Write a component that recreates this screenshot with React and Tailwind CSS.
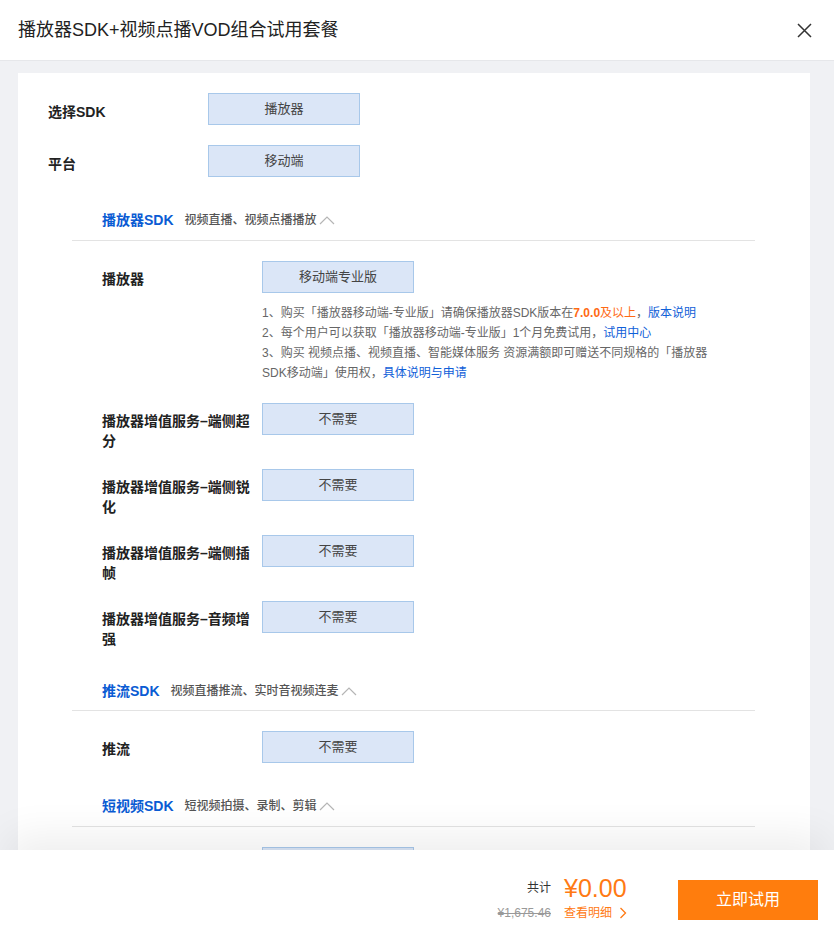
import React from 'react';

const FONT = { fontFamily: '"Liberation Sans", "Noto Sans CJK SC", sans-serif' };

function OptionBox({ children }) {
  return (
    <div className="w-[152px] h-[32px] shrink-0 flex items-center justify-center bg-[#dbe6f7] border border-[#a8c8ea] text-[13px] text-[#444]">
      {children}
    </div>
  );
}

function ChevronUp() {
  return (
    <svg width="16" height="10" viewBox="0 0 16 10" className="ml-[2px]">
      <path d="M1 9 L8 2 L15 9" fill="none" stroke="#b5b5b5" strokeWidth="1.2" />
    </svg>
  );
}

function SectionHeader({ title, desc, className = '' }) {
  return (
    <div className={`flex items-center pl-[30px] border-b border-[#e3e3e3] ${className}`}>
      <span className="text-sm font-bold text-[#0a5bd3] leading-[20px]">{title}</span>
      <span className="ml-[11px] text-xs font-medium text-[#555] leading-[20px]">{desc}</span>
      <ChevronUp />
    </div>
  );
}

function Row({ label, value, className = '' }) {
  return (
    <div className={`flex items-start pl-[30px] ${className}`}>
      <div className="w-[160px] shrink-0 pt-[8px] text-sm font-bold text-[#222] leading-[20px]">{label}</div>
      <OptionBox>{value}</OptionBox>
    </div>
  );
}

const addons = [
  ['播放器增值服务–端侧超', '分'],
  ['播放器增值服务–端侧锐', '化'],
  ['播放器增值服务–端侧插', '帧'],
  ['播放器增值服务–音频增', '强'],
];

export default function App() {
  return (
    <div className="h-[943px] flex flex-col overflow-hidden bg-white" style={FONT}>
      <div className="h-[61px] shrink-0 flex items-center justify-between pl-[18px] pr-[22px] border-b border-[#e6e7ea]">
        <h1 className="text-[18px] text-[#222] font-normal">播放器SDK+视频点播VOD组合试用套餐</h1>
        <svg width="15" height="15" viewBox="0 0 15 15">
          <path d="M1 1 L14 14 M14 1 L1 14" stroke="#333" strokeWidth="1.5" />
        </svg>
      </div>

      <div className="flex-1 overflow-hidden bg-[#f0f1f4] pl-[18px] pr-[24px] pt-[12px]">
        <div className="bg-white px-[30px] pt-[20px] pb-10">
          <div className="flex items-start">
            <div className="w-[160px] pt-[9px] text-sm font-bold text-[#222] leading-[20px]">选择SDK</div>
            <OptionBox>播放器</OptionBox>
          </div>
          <div className="flex items-start mt-[20px]">
            <div className="w-[160px] pt-[9px] text-sm font-bold text-[#222] leading-[20px]">平台</div>
            <OptionBox>移动端</OptionBox>
          </div>

          <div className="ml-[24px] mr-[25px]">
            <SectionHeader className="mt-[33px] pb-[10px]" title="播放器SDK" desc="视频直播、视频点播播放" />
            <Row className="mt-[20px]" label="播放器" value="移动端专业版" />
            <div className="ml-[190px] mt-[10px] text-xs text-[#666] leading-[20px] whitespace-nowrap">
              <div>
                1、购买「播放器移动端-专业版」请确保播放器SDK版本在<span className="font-bold text-[#ff6a14]">7.0.0</span>
                <span className="text-[#ff6a14]">及以上</span>，<span className="text-[#1060d8]">版本说明</span>
              </div>
              <div>
                2、每个用户可以获取「播放器移动端-专业版」1个月免费试用，<span className="text-[#1060d8]">试用中心</span>
              </div>
              <div>3、购买 视频点播、视频直播、智能媒体服务 资源满额即可赠送不同规格的「播放器</div>
              <div>
                SDK移动端」使用权，<span className="text-[#1060d8]">具体说明与申请</span>
              </div>
            </div>
            {addons.map(([a, b], i) => (
              <Row
                key={a + b}
                className={i === 0 ? 'mt-[20px]' : 'mt-[18px]'}
                label={<>{a}<br />{b}</>}
                value="不需要"
              />
            ))}

            <SectionHeader className="mt-[32px] pb-[9px]" title="推流SDK" desc="视频直播推流、实时音视频连麦" />
            <Row className="mt-[20px]" label="推流" value="不需要" />

            <SectionHeader className="mt-[33px] pb-[10px]" title="短视频SDK" desc="短视频拍摄、录制、剪辑" />
            <Row className="mt-[20px]" label="短视频" value="不需要" />
          </div>
        </div>
      </div>

      <div className="relative z-10 h-[93px] shrink-0 bg-white flex items-center justify-end pr-[16px] shadow-[0_-22px_40px_-8px_rgba(0,0,0,0.07)]">
        <div className="grid grid-cols-[auto_auto] gap-x-[13px] items-center mr-[51px] pt-[2px]">
          <span className="text-xs text-[#333] text-right leading-[28px]">共计</span>
          <span className="text-[25px] text-[#ff7a14] leading-[28px]">¥0.00</span>
          <span className="text-xs text-[#999] line-through text-right leading-[18px] mt-[2px]">¥1,675.46</span>
          <span className="text-xs text-[#ff7a14] leading-[18px] mt-[2px] flex items-center">
            查看明细
            <svg width="8" height="12" viewBox="0 0 8 12" className="ml-[7px]">
              <path d="M1.5 1 L6.5 6 L1.5 11" fill="none" stroke="#ff7a14" strokeWidth="1.3" />
            </svg>
          </span>
        </div>
        <button className="w-[140px] h-[40px] mt-[6px] bg-[#ff7d0d] text-white text-base">立即试用</button>
      </div>
    </div>
  );
}
